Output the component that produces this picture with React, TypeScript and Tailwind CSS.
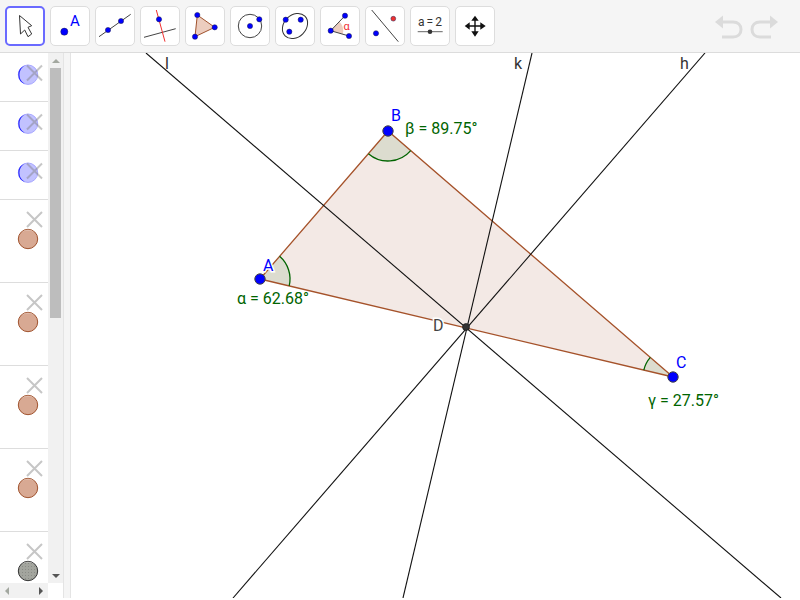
import React from "react";

const B = "#0000ff";

function Pt({ x, y, r = 3, c = B }: { x: number; y: number; r?: number; c?: string }) {
  return <circle cx={x} cy={y} r={r} fill={c} stroke="#1a1a4a" strokeWidth={0.5} />;
}

function ToolButton({ active, children }: { active?: boolean; children: React.ReactNode }) {
  return (
    <div
      className={
        active
          ? "h-10 w-10 shrink-0 rounded-[5px] border-2 border-[#6a6aff] bg-white"
          : "h-10 w-10 shrink-0 rounded-[5px] border border-[#dddddd] bg-white"
      }
    >
      <svg viewBox="0 0 40 40" className={active ? "-m-0.5 block h-10 w-10" : "-m-px block h-10 w-10"}>
        {children}
      </svg>
    </div>
  );
}

function Toolbar() {
  return (
    <div className="flex h-[53px] shrink-0 items-start justify-between border-b border-[#dcdcdc] bg-[#f5f5f5] pl-[5px] pr-5 pt-1.5">
      <div className="flex gap-[5px]">
        <ToolButton active>
          <path d="M14.5 9.5 L15.5 28 L19.7 24 L23 30.7 L26.7 28 L23 21.3 L26.7 19.7 Z" fill="#fff" stroke="#333" strokeWidth={1} strokeLinejoin="round" />
        </ToolButton>
        <ToolButton>
          <circle cx={14.3} cy={25.7} r={3.6} fill={B} stroke="#222" strokeWidth={0.4} />
          <text x={20} y={20} className="fill-[#0000ff] font-['Roboto',sans-serif] text-[15px]">A</text>
        </ToolButton>
        <ToolButton>
          <line x1={4} y1={30.7} x2={35.7} y2={8.3} stroke="#444" strokeWidth={1} />
          <Pt x={13} y={24} r={2.6} />
          <Pt x={26} y={15} r={2.6} />
        </ToolButton>
        <ToolButton>
          <line x1={4} y1={31.3} x2={35.7} y2={22.7} stroke="#444" strokeWidth={1} />
          <line x1={16.3} y1={4} x2={25} y2={35.7} stroke="#f03030" strokeWidth={1} />
          <Pt x={19} y={13.3} r={2.6} />
        </ToolButton>
        <ToolButton>
          <path d="M12.3 9 L29.7 21.3 L10 30.7 Z" fill="#eccdbf" stroke="#a0522d" strokeWidth={1} />
          <Pt x={12.3} y={9} r={2.6} />
          <Pt x={29.7} y={21.3} r={2.6} />
          <Pt x={10} y={30.7} r={2.6} />
        </ToolButton>
        <ToolButton>
          <circle cx={20} cy={20} r={11.7} fill="none" stroke="#444" strokeWidth={1} />
          <Pt x={20} y={20} r={2.6} />
          <Pt x={29.3} y={13.3} r={2.6} />
        </ToolButton>
        <ToolButton>
          <ellipse cx={20} cy={20} rx={14} ry={11} transform="rotate(-45 20 20)" fill="none" stroke="#333" strokeWidth={1} />
          <Pt x={10.7} y={13.7} r={2.6} />
          <Pt x={25.7} y={13.7} r={2.6} />
          <Pt x={14.3} y={25.7} r={2.6} />
        </ToolButton>
        <ToolButton>
          <path d="M10.7 24.7 L19.5 15.7 A12.5 12.5 0 0 1 22.7 28 Z" fill="#eccdbf" />
          <line x1={10.7} y1={24.7} x2={25} y2={9.7} stroke="#444" strokeWidth={1} />
          <line x1={10.7} y1={24.7} x2={29} y2={30} stroke="#444" strokeWidth={1} />
          <Pt x={10.7} y={24.7} r={2.6} />
          <Pt x={25} y={9.7} r={2.6} />
          <Pt x={29} y={30} r={2.6} />
          <text x={23.5} y={23.5} className="fill-[#f03030] font-['Roboto',sans-serif] text-[11px]">α</text>
        </ToolButton>
        <ToolButton>
          <line x1={6.7} y1={4} x2={33.3} y2={35.7} stroke="#444" strokeWidth={1} />
          <Pt x={28.3} y={12.7} r={2.4} c="#f03030" />
          <Pt x={11} y={27.3} r={2.6} />
        </ToolButton>
        <ToolButton>
          <text x={20} y={19.5} textAnchor="middle" className="fill-[#333] font-['Roboto',sans-serif] text-[12px] [word-spacing:-1px]">a = 2</text>
          <line x1={7.7} y1={25.7} x2={32.7} y2={25.7} stroke="#666" strokeWidth={1} />
          <circle cx={20} cy={25.7} r={2.3} fill="#333" />
        </ToolButton>
        <ToolButton>
          <path d="M20 9.7 L16.3 14.7 H19.3 V19.3 H14.7 V16.3 L9.7 20 L14.7 23.7 V20.7 H19.3 V25.3 H16.3 L20 30.7 L23.7 25.3 H20.7 V20.7 H25.3 V23.7 L30.7 20 L25.3 16.3 V19.3 H20.7 V14.7 H23.7 Z" fill="#111" />
        </ToolButton>
      </div>
      <div className="flex gap-[3px] pt-1.5">
        <svg viewBox="0 0 32 28" className="h-7 w-8" fill="none">
          <path d="M2 10 L10 3.5 V16.5 Z" fill="#dbdbdb" />
          <path d="M9 10 H20 C25 10 28 13 28 17.5 C28 22 25 25 20 25 H9" stroke="#dbdbdb" strokeWidth={3} />
        </svg>
        <svg viewBox="0 0 32 28" className="h-7 w-8" fill="none">
          <path d="M30 10 L22 3.5 V16.5 Z" fill="#dbdbdb" />
          <path d="M23 10 H12 C7 10 4 13 4 17.5 C4 22 7 25 12 25 H23" stroke="#dbdbdb" strokeWidth={3} />
        </svg>
      </div>
    </div>
  );
}

function Cross({ y }: { y: number }) {
  return <path d={`M27 ${y - 7.5} L42 ${y + 7.5} M42 ${y - 7.5} L27 ${y + 7.5}`} stroke="#808080" strokeOpacity={0.45} strokeWidth={2} />;
}

function BlueRow() {
  return (
    <div className="h-[49px] shrink-0 border-b border-[#dddddd]">
      <svg viewBox="0 0 48 48" className="block h-12 w-12">
        <circle cx={28} cy={21.7} r={9.7} fill="#c2c2ff" stroke="#a8a8ff" strokeWidth={1} />
        <path d="M25 12.5 A9.7 9.7 0 0 0 25 30.9 A10.4 10.4 0 0 1 25 12.5 Z" fill="#2020ff" />
        <Cross y={20} />
      </svg>
    </div>
  );
}

function MarbleRow({ last, grey }: { last?: boolean; grey?: boolean }) {
  return (
    <div className={last ? "h-[83px] shrink-0" : "h-[83px] shrink-0 border-b border-[#dddddd]"}>
      <svg viewBox="0 0 48 82" className="block h-[82px] w-12">
        <defs>
          <pattern id="grain" width={3} height={3} patternUnits="userSpaceOnUse">
            <rect x={1} y={1} width={1} height={1} fill="#8a8c86" />
          </pattern>
        </defs>
        <Cross y={19.5} />
        <circle
          cx={28}
          cy={39}
          r={9.7}
          fill={grey ? "#a3a59e" : "#d8a993"}
          stroke={grey ? "#333333" : "#a0522d"}
          strokeWidth={1}
        />
        {grey ? <circle cx={28} cy={39} r={9} fill="url(#grain)" /> : null}
        <path d="M21 32.5 A9.7 9.7 0 0 1 35 32.5 A14 14 0 0 0 21 32.5 Z" fill="#ffffff" fillOpacity={0.35} />
      </svg>
    </div>
  );
}

function Sidebar() {
  return (
    <div className="flex w-[71px] shrink-0 bg-white">
      <div className="flex w-[63px] flex-col">
        <div className="flex min-h-0 flex-1">
          <div className="flex w-12 flex-col overflow-hidden">
            <BlueRow />
            <BlueRow />
            <BlueRow />
            <MarbleRow />
            <MarbleRow />
            <MarbleRow />
            <MarbleRow />
            <MarbleRow grey last />
          </div>
          <div className="flex w-[15px] flex-col items-center bg-[#f1f1f1]">
            <div className="flex h-[15px] items-center justify-center">
              <div className="h-0 w-0 border-x-[4px] border-b-[4px] border-x-transparent border-b-[#a3a8a0]" />
            </div>
            <div className="h-[250px] w-[11px] bg-[#bdbdbd]" />
            <div className="flex-1" />
            <div className="flex h-[15px] items-center justify-center">
              <div className="h-0 w-0 border-x-[4px] border-t-[4px] border-x-transparent border-t-[#555555]" />
            </div>
          </div>
        </div>
        <div className="flex h-[15px] shrink-0">
          <div className="flex w-12 items-center justify-between bg-[#f1f1f1] px-[5px]">
            <div className="h-0 w-0 border-y-[4px] border-r-[4px] border-y-transparent border-r-[#a3a8a0]" />
            <div className="h-0 w-0 border-y-[4px] border-l-[4px] border-y-transparent border-l-[#555555]" />
          </div>
        </div>
      </div>
      <div className="w-2 border-x border-[#e4e4e4] bg-[#f5f5f5]" />
    </div>
  );
}

function Canvas() {
  const label = "font-['Roboto',sans-serif] text-[16px]";
  return (
    <div className="min-w-0 flex-1 bg-white">
      <svg viewBox="71 53 729 545" className="block h-full w-full">
        <path d="M260 279 L388 131 L673 377 Z" fill="#f3e9e5" />
        <path d="M260 279 L279.6 256.3 A30 30 0 0 1 289.2 285.9 Z" fill="#dcdccf" />
        <path d="M388 131 L368.4 153.7 A30 30 0 0 0 410.7 150.6 Z" fill="#dcdccf" />
        <path d="M673 377 L643.8 370.1 A30 30 0 0 1 650.3 357.4 Z" fill="#dcdccf" />
        <path d="M260 279 L388 131 L673 377 Z" fill="none" stroke="#a5522a" strokeWidth={1.3} />
        <path d="M279.6 256.3 A30 30 0 0 1 289.2 285.9" fill="none" stroke="#006400" strokeWidth={1.3} />
        <path d="M368.4 153.7 A30 30 0 0 0 410.7 150.6" fill="none" stroke="#006400" strokeWidth={1.3} />
        <path d="M643.8 370.1 A30 30 0 0 1 650.3 357.4" fill="none" stroke="#006400" strokeWidth={1.3} />
        <line x1={146} y1={53} x2={781} y2={598} stroke="#111" strokeWidth={1.1} />
        <line x1={532} y1={53} x2={403} y2={598} stroke="#111" strokeWidth={1.1} />
        <line x1={705} y1={53} x2={233} y2={598} stroke="#111" strokeWidth={1.1} />
        <circle cx={466} cy={327} r={3.5} fill="#333" stroke="#111" strokeWidth={0.6} />
        <circle cx={260} cy={279} r={5.2} fill={B} stroke="#444" strokeWidth={1} />
        <circle cx={388} cy={131} r={5.2} fill={B} stroke="#444" strokeWidth={1} />
        <circle cx={673} cy={377} r={5.2} fill={B} stroke="#444" strokeWidth={1} />
        <text x={165} y={69} className={`${label} fill-[#333]`}>l</text>
        <text x={514} y={69} className={`${label} fill-[#333]`}>k</text>
        <text x={680} y={69} className={`${label} fill-[#333]`}>h</text>
        <text x={263} y={271} stroke="#ffffff" strokeWidth={3} paintOrder="stroke" className={`${label} fill-[#0000ff]`}>A</text>
        <text x={391} y={121} className={`${label} fill-[#0000ff]`}>B</text>
        <text x={676} y={368} className={`${label} fill-[#0000ff]`}>C</text>
        <text x={433} y={331} stroke="#ffffff" strokeWidth={3} paintOrder="stroke" className={`${label} fill-[#444]`}>D</text>
        <text x={405} y={134} className={`${label} fill-[#006400]`}>β = 89.75°</text>
        <text x={237} y={304} className={`${label} fill-[#006400]`}>α = 62.68°</text>
        <text x={648} y={406} className={`${label} fill-[#006400]`}>γ = 27.57°</text>
      </svg>
    </div>
  );
}

export default function App() {
  return (
    <div className="flex h-[600px] w-[800px] flex-col overflow-hidden bg-white">
      <Toolbar />
      <div className="flex min-h-0 flex-1 pb-0.5">
        <Sidebar />
        <Canvas />
      </div>
    </div>
  );
}
